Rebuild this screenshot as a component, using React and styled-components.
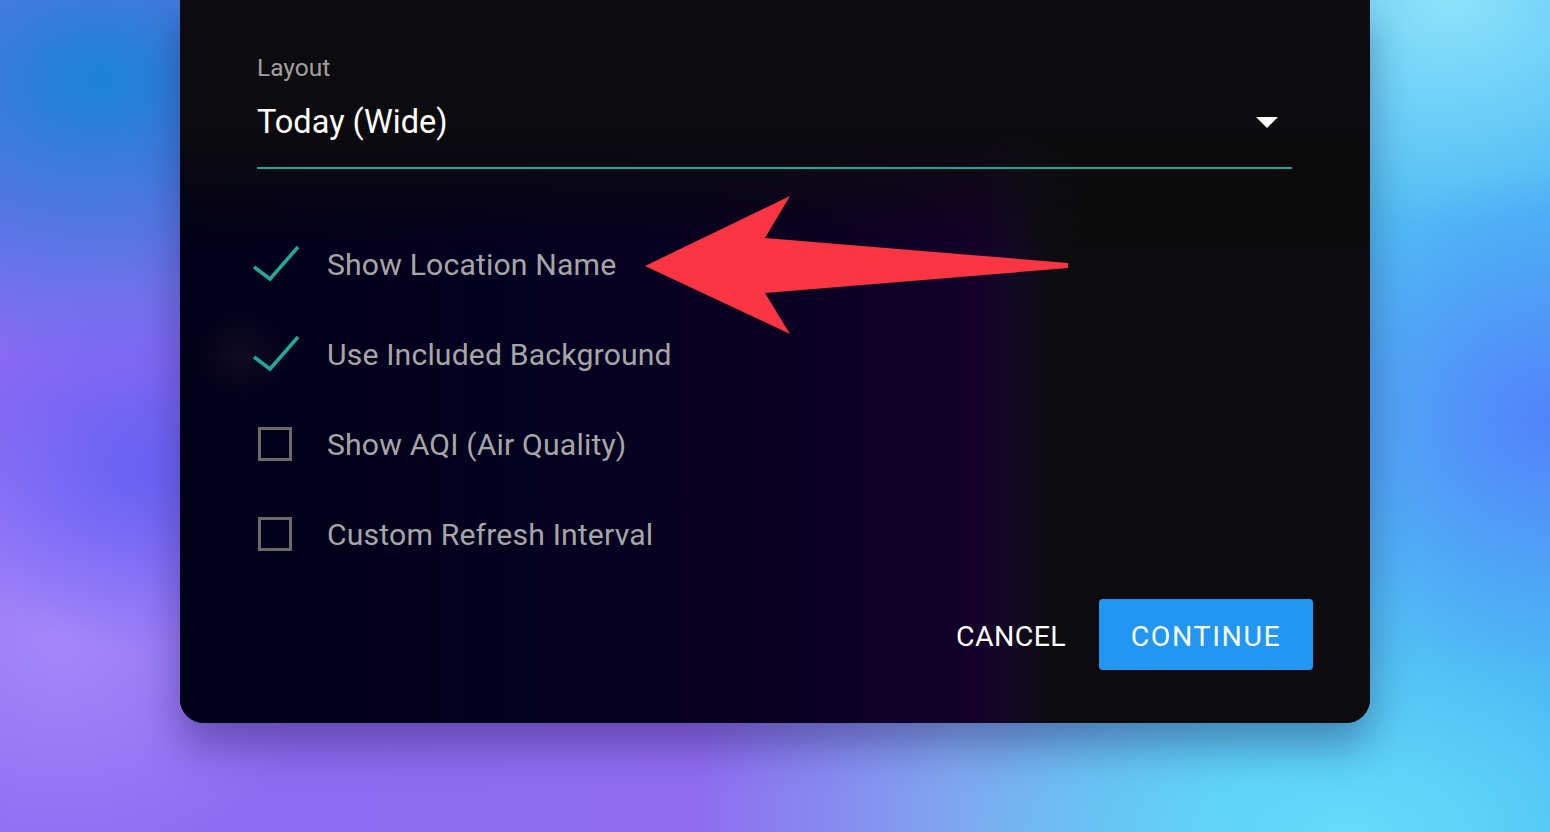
import React from "react";
import styled, { createGlobalStyle } from "styled-components";

const Global = createGlobalStyle`
  html, body { margin: 0; padding: 0; height: 100%; }
  body {
    width: 1550px;
    height: 832px;
    overflow: hidden;
    font-family: Roboto, "Liberation Sans", sans-serif;
    background:
      radial-gradient(ellipse 420px 360px at 1550px 420px, rgba(82,128,250,0.95), rgba(82,128,250,0) 70%),
      radial-gradient(ellipse 520px 260px at 1350px 832px, rgba(100,220,250,1), rgba(100,220,250,0) 75%),
      radial-gradient(ellipse 420px 300px at 1450px 0px, rgba(140,226,250,1), rgba(140,226,250,0) 75%),
      radial-gradient(ellipse 300px 260px at 140px 470px, rgba(100,96,245,0.9), rgba(100,96,245,0) 70%),
      radial-gradient(ellipse 380px 330px at 60px 640px, rgba(164,136,250,1), rgba(164,136,250,0) 70%),
      radial-gradient(ellipse 500px 360px at 100px 80px, rgba(26,130,214,1), rgba(26,130,214,0) 80%),
      linear-gradient(90deg, #8c6cf2 0%, #8f6cf0 45%, #7fa8f0 62%, #56c4f4 80%, #4cb8f4 100%);
  }
  #root { width: 100%; height: 100%; }
`;

const Page = styled.div`
  width: 100%;
  height: 100%;
  display: flex;
  justify-content: center;
  align-items: flex-start;
`;

const Panel = styled.div`
  position: relative;
  width: 1190px;
  height: 723px;
  box-sizing: border-box;
  background: #0c0c0e;
  border-radius: 0 0 24px 24px;
  box-shadow: 0 22px 40px rgba(20, 10, 60, 0.35);
  overflow: hidden;
  padding: 53px 78px 0 77px;
  display: flex;
  flex-direction: column;
`;

const Backdrop = styled.div`
  position: absolute;
  inset: 0;
  pointer-events: none;
  background:
    radial-gradient(ellipse 50px 45px at 60px 355px, rgba(50,44,60,0.25), rgba(50,44,60,0) 100%),
    linear-gradient(90deg, #020019 0%, #040020 30%, #090022 50%, #0f0027 61%, #140029 67%, #120a22 70%, #0d0c10 73%, #0c0c0e 76%, #0c0c0e 100%);
  -webkit-mask-image: linear-gradient(180deg, transparent 130px, #000 250px);
  mask-image: linear-gradient(180deg, transparent 130px, #000 250px);
`;

const Field = styled.div`
  position: relative;
  display: flex;
  flex-direction: column;
  border-bottom: 2px solid #26a69a;
  z-index: 1;
`;

const Label = styled.div`
  font-size: 24.5px;
  color: #a0a0a0;
  line-height: 30px;
`;

const SelectRow = styled.div`
  display: flex;
  align-items: center;
  justify-content: space-between;
  height: 84px;
  box-sizing: border-box;
  padding-bottom: 6px;
`;

const SelectValue = styled.div`
  font-size: 32.5px;
  color: #ffffff;
`;

const Caret = styled.svg`
  width: 22px;
  height: 12px;
  margin-right: 14px;
  margin-top: 2px;
`;

const Options = styled.div`
  position: relative;
  z-index: 1;
  display: flex;
  flex-direction: column;
  margin-top: 50px;
`;

const OptionRow = styled.div`
  display: flex;
  align-items: center;
  height: 90px;
`;

const Box = styled.div`
  width: 48px;
  height: 48px;
  display: flex;
  align-items: center;
  margin-left: -5px;
  margin-right: 27px;
`;

const EmptyBox = styled.div`
  width: 28px;
  height: 28px;
  margin-left: 6px;
  border: 3px solid #6a6a6a;
`;

const OptionText = styled.span`
  font-size: 30.2px;
  color: #a6a6a6;
  letter-spacing: 0.15px;
`;

const Actions = styled.div`
  position: relative;
  z-index: 1;
  display: flex;
  justify-content: flex-end;
  align-items: center;
  gap: 33px;
  margin-top: 20px;
  margin-right: -21px;
`;

const TextButton = styled.button`
  background: none;
  border: none;
  color: #ffffff;
  font-family: Roboto, "Liberation Sans", sans-serif;
  font-size: 28.5px;
  letter-spacing: 0.4px;
  padding: 0;
  margin-top: 3px;
  cursor: pointer;
`;

const PrimaryButton = styled.button`
  width: 214px;
  height: 71px;
  background: #2196f3;
  border: none;
  border-radius: 4px;
  color: #ffffff;
  font-family: Roboto, "Liberation Sans", sans-serif;
  font-size: 28.5px;
  letter-spacing: 1.6px;
  padding: 3px 0 0;
  cursor: pointer;
`;

const Arrow = styled.svg`
  position: absolute;
  left: 0;
  top: 0;
  width: 1190px;
  height: 723px;
  z-index: 2;
  pointer-events: none;
`;

const Check = () => (
  <svg width="48" height="48" viewBox="0 0 48 48">
    <path d="M2 27 L18 39 L46 7" fill="none" stroke="#26a69a" strokeWidth="3.6" />
  </svg>
);

const options = [
  { label: "Show Location Name", checked: true },
  { label: "Use Included Background", checked: true },
  { label: "Show AQI (Air Quality)", checked: false },
  { label: "Custom Refresh Interval", checked: false },
];

export default function App() {
  return (
    <>
      <Global />
      <Page>
        <Panel>
          <Backdrop />
          <Field>
            <Label>Layout</Label>
            <SelectRow>
              <SelectValue>Today (Wide)</SelectValue>
              <Caret viewBox="0 0 22 12">
                <path d="M0 0 H22 L11 11 Z" fill="#ffffff" />
              </Caret>
            </SelectRow>
          </Field>
          <Options>
            {options.map((o) => (
              <OptionRow key={o.label}>
                <Box>{o.checked ? <Check /> : <EmptyBox />}</Box>
                <OptionText>{o.label}</OptionText>
              </OptionRow>
            ))}
          </Options>
          <Actions>
            <TextButton>CANCEL</TextButton>
            <PrimaryButton>CONTINUE</PrimaryButton>
          </Actions>
          <Arrow viewBox="0 0 1190 723">
            <polygon
              points="465,266 610,196 585,238 888,263 888,268 585,293 610,334"
              fill="#fb3542"
            />
          </Arrow>
        </Panel>
      </Page>
    </>
  );
}
